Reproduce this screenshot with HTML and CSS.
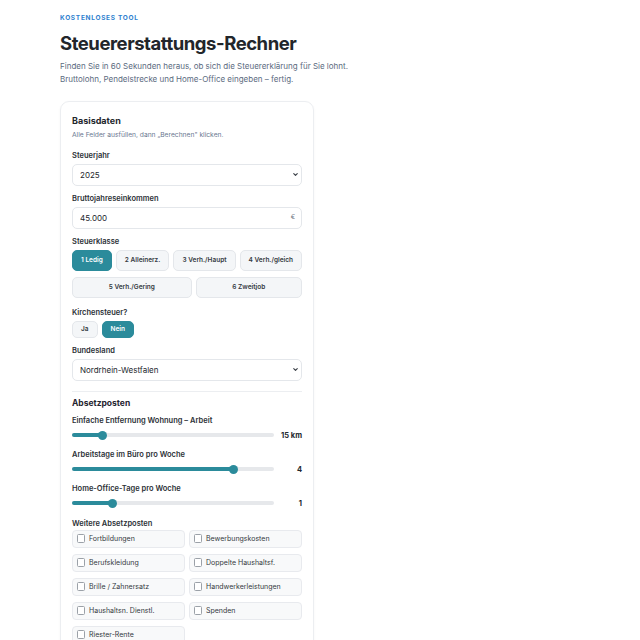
FILE: index.html
```html
<!DOCTYPE html>
<html lang="de">
<head>
    <meta charset="UTF-8">
    <meta name="viewport" content="width=device-width, initial-scale=1.0">
    <title>Steuererstattungs-Rechner</title>
    <link rel="stylesheet" href="styles.css">
</head>
<body>
    <main class="page">
        <header class="intro">
            <p class="eyebrow">Kostenloses Tool</p>
            <h1 class="title">Steuererstattungs-Rechner</h1>
            <p class="lead">Finden Sie in 60 Sekunden heraus, ob sich die Steuererklärung für Sie lohnt.<br>Bruttolohn, Pendelstrecke und Home-Office eingeben – fertig.</p>
        </header>

        <section class="card">
            <h2 class="card-title">Basisdaten</h2>
            <p class="hint">Alle Felder ausfüllen, dann „Berechnen" klicken.</p>

            <div class="field">
                <label class="label">Steuerjahr</label>
                <div class="control">
                    <select class="input">
                        <option>2025</option>
                        <option>2024</option>
                        <option>2023</option>
                    </select>
                    <svg class="chevron" viewBox="0 0 10 10"><path d="M2.5 3.8 5 6.3l2.5-2.5" fill="none" stroke="currentColor" stroke-width="1.6" stroke-linecap="round" stroke-linejoin="round"/></svg>
                </div>
            </div>

            <div class="field">
                <label class="label">Bruttojahreseinkommen</label>
                <div class="control">
                    <input class="input" type="text" value="45.000">
                    <span class="unit">€</span>
                </div>
            </div>

            <div class="field">
                <label class="label">Steuerklasse</label>
                <div class="choices">
                    <button class="choice is-active">1 Ledig</button>
                    <button class="choice">2 Alleinerz.</button>
                    <button class="choice">3 Verh./Haupt</button>
                    <button class="choice">4 Verh./gleich</button>
                    <button class="choice">5 Verh./Gering</button>
                    <button class="choice">6 Zweitjob</button>
                </div>
            </div>

            <div class="field field-loose">
                <label class="label">Kirchensteuer?</label>
                <div class="toggle">
                    <button class="choice small">Ja</button>
                    <button class="choice small is-active">Nein</button>
                </div>
            </div>

            <div class="field">
                <label class="label">Bundesland</label>
                <div class="control">
                    <select class="input">
                        <option>Nordrhein-Westfalen</option>
                        <option>Bayern</option>
                        <option>Berlin</option>
                    </select>
                    <svg class="chevron" viewBox="0 0 10 10"><path d="M2.5 3.8 5 6.3l2.5-2.5" fill="none" stroke="currentColor" stroke-width="1.6" stroke-linecap="round" stroke-linejoin="round"/></svg>
                </div>
            </div>

            <hr class="divider">

            <h3 class="section-title">Absetzposten</h3>

            <div class="range-field">
                <label class="label">Einfache Entfernung Wohnung – Arbeit</label>
                <div class="range-row">
                    <div class="range"><div class="range-fill" style="width: 15%"></div></div>
                    <span class="range-value">15 km</span>
                </div>
            </div>

            <div class="range-field">
                <label class="label">Arbeitstage im Büro pro Woche</label>
                <div class="range-row">
                    <div class="range"><div class="range-fill" style="width: 80%"></div></div>
                    <span class="range-value">4</span>
                </div>
            </div>

            <div class="range-field">
                <label class="label">Home-Office-Tage pro Woche</label>
                <div class="range-row">
                    <div class="range"><div class="range-fill" style="width: 20%"></div></div>
                    <span class="range-value">1</span>
                </div>
            </div>

            <div class="field field-after-range">
                <label class="label">Weitere Absetzposten</label>
                <div class="checks">
                    <label class="check"><span class="box"></span>Fortbildungen</label>
                    <label class="check"><span class="box"></span>Bewerbungskosten</label>
                    <label class="check"><span class="box"></span>Berufskleidung</label>
                    <label class="check"><span class="box"></span>Doppelte Haushaltsf.</label>
                    <label class="check"><span class="box"></span>Brille / Zahnersatz</label>
                    <label class="check"><span class="box"></span>Handwerkerleistungen</label>
                    <label class="check"><span class="box"></span>Haushaltsn. Dienstl.</label>
                    <label class="check"><span class="box"></span>Spenden</label>
                    <label class="check"><span class="box"></span>Riester-Rente</label>
                </div>
            </div>
        </section>
    </main>
</body>
</html>
```

FILE: styles.css
```css
* {
    box-sizing: border-box;
}
body {
    margin: 0;
    background: #fff;
    color: #23272d;
    font-family: Inter, "Noto Sans", sans-serif;
}
.page {
    padding: 15px 0 0 60px;
    width: 380px;
}
.eyebrow {
    margin: 0;
    font-size: 6.5px;
    line-height: 7px;
    font-weight: 700;
    letter-spacing: 0.11em;
    text-transform: uppercase;
    color: #2f7fcf;
}
.title {
    margin: 9px 0 0;
    font-size: 18.5px;
    line-height: 24px;
    font-weight: 700;
    letter-spacing: -0.025em;
    color: #22262b;
}
.lead {
    margin: 5px 0 0;
    font-size: 8px;
    line-height: 13px;
    color: #5b6b80;
}
.card {
    margin-top: 15px;
    width: 254px;
    padding: 12px 11px 12px;
    border: 1px solid #eceef1;
    border-radius: 9px;
    box-shadow: 0 1px 3px rgba(20, 30, 50, 0.04);
}
.card-title {
    margin: 0;
    font-size: 9px;
    line-height: 14px;
    font-weight: 700;
}
.hint {
    margin: 2px 0 0;
    font-size: 6.7px;
    line-height: 10px;
    color: #6a7890;
}
.field {
    margin-top: 10px;
}
.field + .field {
    margin-top: 7.5px;
}
.field-loose {
    margin-top: 9.5px !important;
}
.field-after-range {
    margin-top: 8.5px;
}
.label {
    display: block;
    font-size: 7.5px;
    line-height: 11px;
    font-weight: 600;
    color: #2b3036;
}
.control {
    position: relative;
    margin-top: 2.5px;
}
.input {
    display: block;
    width: 100%;
    height: 22px;
    padding: 0 7px;
    border: 1px solid #e4e7eb;
    border-radius: 5px;
    background: #fff;
    font: inherit;
    font-size: 8px;
    color: #23272d;
    appearance: none;
    outline: none;
}
.chevron {
    position: absolute;
    right: 3px;
    top: 7.5px;
    width: 7px;
    height: 7px;
    color: #3a3f46;
    pointer-events: none;
}
.unit {
    position: absolute;
    right: 7px;
    top: 6.5px;
    font-size: 6.5px;
    color: #6b7280;
}
.choices {
    margin-top: 2.5px;
    display: flex;
    flex-wrap: wrap;
    gap: 6px 4px;
}
.choice {
    flex: 1 1 auto;
    height: 21px;
    padding: 0 8px;
    border: 1px solid #e4e7eb;
    border-radius: 5px;
    background: #f4f6f8;
    font: inherit;
    font-size: 6.5px;
    font-weight: 600;
    color: #353a41;
}
.choice.is-active {
    background: #2b8b9b;
    border-color: #2b8b9b;
    color: #fff;
}
.toggle {
    margin-top: 2.5px;
    display: flex;
    gap: 4px;
}
.choice.small {
    flex: 0 0 auto;
    height: 17px;
    padding: 0 8px;
}
.divider {
    margin: 10px 0 0;
    border: 0;
    border-top: 1px solid #eceef1;
}
.section-title {
    margin: 5.5px 0 0;
    font-size: 8.5px;
    line-height: 12px;
    font-weight: 700;
    color: #1f2430;
}
.range-field {
    margin-top: 5.5px;
}
.range-field + .range-field {
    margin-top: 7.5px;
}
.range-row {
    margin-top: 3.5px;
    height: 12px;
    display: flex;
    align-items: center;
    gap: 6px;
}
.range {
    position: relative;
    flex: 1;
    height: 4px;
    border-radius: 2px;
    background: #e6e8eb;
}
.range-fill {
    position: relative;
    height: 100%;
    border-radius: 2px;
    background: #2b8b9b;
}
.range-fill::after {
    content: "";
    position: absolute;
    right: -4.5px;
    top: -2.5px;
    width: 9px;
    height: 9px;
    border-radius: 50%;
    background: #2b8b9b;
}
.range-value {
    min-width: 22px;
    text-align: right;
    font-size: 7.5px;
    font-weight: 700;
    color: #23272d;
}
.checks {
    margin-top: 1px;
    display: grid;
    grid-template-columns: 1fr 1fr;
    gap: 6px 4px;
}
.check {
    display: flex;
    align-items: center;
    gap: 4px;
    height: 18px;
    padding: 0 3.5px;
    border: 1px solid #e8eaee;
    border-radius: 4px;
    background: #f8f9fa;
    font-size: 7px;
    color: #353a41;
}
.box {
    width: 8.5px;
    height: 8.5px;
    border: 1px solid #9ba1a8;
    border-radius: 1.5px;
    background: #fff;
}
```
